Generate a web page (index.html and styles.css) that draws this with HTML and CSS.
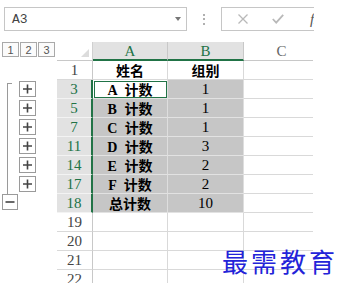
FILE: index.html
```html
<!DOCTYPE html>
<html lang="zh">
<head>
<meta charset="utf-8">
<title>分级显示</title>
<link rel="stylesheet" href="styles.css">
</head>
<body>
<div class="app">
  <div class="fbar">
    <div class="namebox"><span class="ref">A3</span><span class="caret"></span></div>
    <div class="dots"><i></i><i></i><i></i></div>
    <div class="fbox">
      <svg class="ico-x" width="10" height="10" viewBox="0 0 10 10"><path d="M0.5 0.5 L9.5 9.5 M9.5 0.5 L0.5 9.5" stroke="#b9b9b9" stroke-width="1.3" fill="none"/></svg>
      <svg class="ico-ok" width="12" height="10" viewBox="0 0 12 10"><path d="M0.8 5 L4.2 8.6 L11.2 0.8" stroke="#b9b9b9" stroke-width="1.8" fill="none"/></svg>
      <span class="fx">fx</span>
    </div>
  </div>
  <div class="main">
    <div class="outline">
      <div class="levels"><span>1</span><span>2</span><span>3</span></div>
      <div class="bracket"></div>
      <div class="pbtn r3"><svg width="15" height="14" viewBox="0 0 15 14"><path d="M3 7 H12 M7.5 2.5 V11.5" stroke="#444" stroke-width="1.6" fill="none"/></svg></div>
      <div class="pbtn r5"><svg width="15" height="14" viewBox="0 0 15 14"><path d="M3 7 H12 M7.5 2.5 V11.5" stroke="#444" stroke-width="1.6" fill="none"/></svg></div>
      <div class="pbtn r7"><svg width="15" height="14" viewBox="0 0 15 14"><path d="M3 7 H12 M7.5 2.5 V11.5" stroke="#444" stroke-width="1.6" fill="none"/></svg></div>
      <div class="pbtn r11"><svg width="15" height="14" viewBox="0 0 15 14"><path d="M3 7 H12 M7.5 2.5 V11.5" stroke="#444" stroke-width="1.6" fill="none"/></svg></div>
      <div class="pbtn r14"><svg width="15" height="14" viewBox="0 0 15 14"><path d="M3 7 H12 M7.5 2.5 V11.5" stroke="#444" stroke-width="1.6" fill="none"/></svg></div>
      <div class="pbtn r17"><svg width="15" height="14" viewBox="0 0 15 14"><path d="M3 7 H12 M7.5 2.5 V11.5" stroke="#444" stroke-width="1.6" fill="none"/></svg></div>
      <div class="mbtn"><svg width="14" height="14" viewBox="0 0 14 14"><path d="M2.5 7 H11.5" stroke="#444" stroke-width="1.6" fill="none"/></svg></div>
    </div>
    <div class="sheet">
      <div class="c corner"><span class="tri"></span></div>
      <div class="c ch sel">A</div>
      <div class="c ch sel">B</div>
      <div class="c ch">C</div>

      <div class="c rh">1</div>
      <div class="c t b">姓名</div>
      <div class="c t b">组别</div>
      <div class="c"></div>

      <div class="c rh sel">3</div>
      <div class="c s act t b ws">A 计数</div>
      <div class="c s n">1</div>
      <div class="c"></div>

      <div class="c rh sel">5</div>
      <div class="c s t b ws">B 计数</div>
      <div class="c s n">1</div>
      <div class="c"></div>

      <div class="c rh sel">7</div>
      <div class="c s t b ws">C 计数</div>
      <div class="c s n">1</div>
      <div class="c"></div>

      <div class="c rh sel">11</div>
      <div class="c s t b ws">D 计数</div>
      <div class="c s n">3</div>
      <div class="c"></div>

      <div class="c rh sel">14</div>
      <div class="c s t b ws">E 计数</div>
      <div class="c s n">2</div>
      <div class="c"></div>

      <div class="c rh sel">17</div>
      <div class="c s t b ws">F 计数</div>
      <div class="c s n">2</div>
      <div class="c"></div>

      <div class="c rh sel">18</div>
      <div class="c s t b">总计数</div>
      <div class="c s n">10</div>
      <div class="c"></div>

      <div class="c rh">19</div>
      <div class="c"></div>
      <div class="c"></div>
      <div class="c"></div>

      <div class="c rh">20</div>
      <div class="c"></div>
      <div class="c"></div>
      <div class="c"></div>

      <div class="c rh">21</div>
      <div class="c"></div>
      <div class="c"></div>
      <div class="c"></div>

      <div class="c rh">22</div>
      <div class="c"></div>
      <div class="c"></div>
      <div class="c"></div>
    </div>
  </div>
</div>
<div class="wm">最需教育</div>
</body>
</html>
```

FILE: styles.css
```css
* { box-sizing: border-box; }
html, body { margin: 0; padding: 0; background: #fff; }
body { position: relative; width: 345px; height: 294px; overflow: hidden; }

.app {
  width: 314px;
  height: 283px;
  overflow: hidden;
  font-family: "Liberation Serif", "Noto Sans CJK SC", serif;
  color: #000;
}

/* formula bar */
.fbar {
  height: 42px;
  display: flex;
  align-items: flex-start;
  padding-top: 7px;
  padding-left: 4px;
  overflow: hidden;
}
.namebox {
  flex: none;
  width: 183px;
  height: 24px;
  border: 1px solid #c6c6c6;
  display: flex;
  align-items: center;
  padding-left: 7px;
  padding-right: 5px;
  justify-content: space-between;
}
.ref {
  font-family: "Liberation Mono", monospace;
  font-size: 13px;
  color: #444;
}
.caret {
  width: 0;
  height: 0;
  border-left: 3.5px solid transparent;
  border-right: 3.5px solid transparent;
  border-top: 4px solid #777;
  margin-top: -1px;
}
.dots {
  flex: none;
  margin-left: 16px;
  height: 24px;
  display: flex;
  flex-direction: column;
  justify-content: center;
  gap: 2.5px;
}
.dots i {
  display: block;
  width: 2px;
  height: 2px;
  background: #b0b0b0;
}
.fbox {
  flex: none;
  margin-left: 16px;
  width: 93px;
  height: 24px;
  border: 1px solid #c6c6c6;
  border-right: none;
  display: flex;
  align-items: center;
  padding-left: 16px;
  overflow: hidden;
}
.ico-x, .ico-ok { flex: none; }
.ico-ok { margin-left: 24px; }
.fx {
  flex: none;
  margin-left: 26px;
  font-family: "Liberation Serif", serif;
  font-style: italic;
  font-size: 15px;
  color: #555;
}

/* main area */
.main {
  display: flex;
  height: 241px;
}
.outline {
  width: 57px;
  flex: none;
  display: grid;
  grid-template-columns: 19px 17px 21px;
  grid-template-rows: repeat(13, 19px);
}
.levels {
  grid-column: 1 / -1;
  grid-row: 1;
  display: flex;
  gap: 1px;
  padding-left: 2px;
}
.levels span {
  width: 17px;
  height: 15px;
  border: 1px solid #a9a9a9;
  font-family: "Liberation Sans", sans-serif;
  font-size: 11px;
  color: #555;
  display: flex;
  align-items: center;
  justify-content: center;
  background: #fbfbfb;
}
.bracket {
  grid-column: 1;
  grid-row: 3 / 9;
  margin-top: 3px;
  margin-left: 7px;
  width: 5px;
  border-left: 1px solid #9a9a9a;
  border-top: 1px solid #9a9a9a;
}
.pbtn {
  grid-column: 2;
  width: 17px;
  height: 16px;
  margin-top: 1px;
  border: 1px solid #9a9a9a;
  background: #fff;
  display: flex;
  align-items: center;
  justify-content: center;
}
.pbtn.r3 { grid-row: 3; }
.pbtn.r5 { grid-row: 4; }
.pbtn.r7 { grid-row: 5; }
.pbtn.r11 { grid-row: 6; }
.pbtn.r14 { grid-row: 7; }
.pbtn.r17 { grid-row: 8; }
.mbtn {
  grid-column: 1;
  grid-row: 9;
  margin-left: 2px;
  width: 16px;
  height: 16px;
  border: 1px solid #9a9a9a;
  background: #fff;
  display: flex;
  align-items: center;
  justify-content: center;
}

/* sheet grid */
.sheet {
  width: 256px;
  flex: none;
  overflow: hidden;
  display: grid;
  grid-template-columns: 36px 75px 76px 76px;
  grid-auto-rows: 19px;
}
.c {
  border-right: 1px solid #d9d9d9;
  border-bottom: 1px solid #d9d9d9;
  display: flex;
  align-items: center;
  justify-content: center;
  font-size: 14px;
  white-space: pre;
}
.corner {
  position: relative;
  background: #fff;
  border-right-color: #d0d0d0;
  border-bottom-color: #c8c8c8;
}
.tri {
  position: absolute;
  right: 3px;
  bottom: 3px;
  width: 0;
  height: 0;
  border-left: 8px solid transparent;
  border-bottom: 8px solid #dcdcdc;
}
.ch {
  font-family: "Liberation Serif", serif;
  font-size: 15px;
  color: #666;
  border-bottom-color: #c8c8c8;
  padding-top: 1px;
}
.ch.sel {
  background: #e2e2e2;
  color: #217346;
  border-right-color: #c8c8c8;
  border-bottom: 2px solid #217346;
}
.rh {
  font-family: "Liberation Serif", serif;
  font-size: 15px;
  color: #444;
  border-right-color: #c8c8c8;
  padding-top: 1px;
}
.rh.sel {
  background: #e2e2e2;
  color: #217346;
  border-right: 2px solid #217346;
  border-bottom-color: #f3f3f3;
}
.t { font-family: "Liberation Serif", "Noto Sans CJK SC", serif; }
.b { font-weight: 700; }
.ws { word-spacing: 4px; }
.n {
  font-family: "Liberation Serif", serif;
  font-size: 15px;
  padding-top: 1px;
}
.s {
  background: #c6c6c6;
  border-right-color: #dedede;
  border-bottom-color: #e2e2e2;
}
.act {
  background: #fff;
  outline: 1px solid #217346;
  outline-offset: -2px;
}

/* watermark overlay */
.wm {
  position: absolute;
  left: 222px;
  top: 246px;
  font-family: "Noto Sans CJK SC", sans-serif;
  font-size: 26px;
  line-height: 30px;
  letter-spacing: 3px;
  color: #2323d8;
  white-space: nowrap;
}
```
